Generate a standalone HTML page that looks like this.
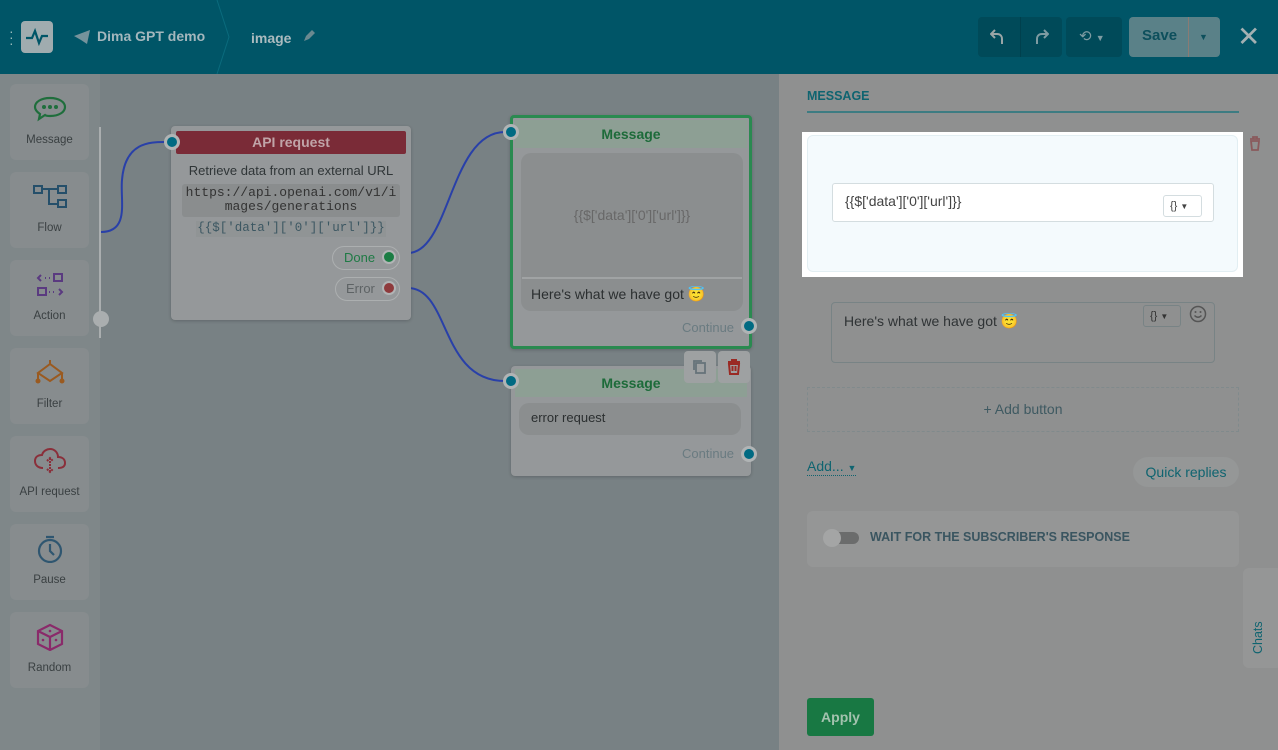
<!DOCTYPE html>
<html><head><meta charset="utf-8"><style>
*{box-sizing:border-box;margin:0;padding:0}
body{width:1278px;height:750px;overflow:hidden;font-family:"Liberation Sans",sans-serif;background:#788184;position:relative}
.abs{position:absolute}
.hdr{left:0;top:0;width:1278px;height:74px;background:#005567}
.side{left:0;top:74px;width:100px;height:676px;background:#7f8789}
.tile{position:absolute;left:10px;width:79px;height:76px;background:#878c8e;border-radius:6px;text-align:center;font-size:11.5px;color:#3a4042}
.tile svg{display:block;margin:11px auto 11px}
.node{background:#95989a;border-radius:4px;box-shadow:0 1px 3px rgba(0,0,0,.2)}
.dot{position:absolute;width:16px;height:16px;border-radius:50%;background:#006a82;border:3px solid #b0b4b5}
.panel{left:779px;top:74px;width:499px;height:676px;background:#8f9090}
.mono{font-family:"Liberation Mono",monospace}
</style></head><body>
<div class="abs hdr">
 <div class="abs" style="left:9px;top:28px;color:#9bb;font-size:14px;line-height:6px">·<br>·<br>·</div>
 <div class="abs" style="left:21px;top:21px;width:32px;height:32px;background:#a0acaf;border-radius:4px"><svg width="32" height="32"><path d="M5 17h6l3-7 4 12 3-7h6" stroke="#005567" stroke-width="2.2" fill="none"/></svg></div>
 <svg class="abs" style="left:73px;top:29px" width="18" height="16"><path d="M1 7L17 1 14 15 8 11z" fill="#76939c"/></svg>
 <div class="abs" style="left:97px;top:28px;color:#a4b7bd;font-size:14px;font-weight:bold">Dima GPT demo</div>
 <svg class="abs" style="left:215px;top:0" width="16" height="74"><path d="M2 0L14 37 2 74" stroke="#0a6b7d" fill="none"/></svg>
 <div class="abs" style="left:251px;top:30px;color:#abbbbf;font-size:14px;font-weight:bold">image</div>
 <svg class="abs" style="left:302px;top:29px" width="14" height="14"><path d="M2 12l2-5 6-6 3 3-6 6z" fill="#6a8990"/></svg>
 <div class="abs" style="left:978px;top:17px;width:84px;height:40px;background:#004a59;border-radius:4px"></div>
 <div class="abs" style="left:1020px;top:17px;width:1px;height:40px;background:#00404d"></div>
 <svg class="abs" style="left:990px;top:28px" width="16" height="18"><path d="M5 2L1 6l4 4M1 6h6c4 0 5 3 5 5v5" fill="none" stroke="#9aa5a6" stroke-width="2"/></svg>
 <svg class="abs" style="left:1033px;top:28px" width="16" height="18"><path d="M11 2l4 4-4 4M15 6H9c-4 0-5 3-5 5v5" fill="none" stroke="#7e9ba2" stroke-width="2"/></svg>
 <div class="abs" style="left:1066px;top:17px;width:56px;height:40px;background:#004a59;border-radius:4px;color:#7e9ba2;font-size:15px;padding:10px 0 0 13px">⟲ <span style="font-size:9px">▼</span></div>
 <div class="abs" style="left:1129px;top:17px;width:91px;height:40px;background:#5a8188;border-radius:4px"></div>
 <div class="abs" style="left:1188px;top:17px;width:1px;height:40px;background:#8a7b74"></div>
 <div class="abs" style="left:1142px;top:27px;color:#0d4f5c;font-size:15px;font-weight:bold">Save</div>
 <div class="abs" style="left:1199px;top:32px;color:#0d4f5c;font-size:9px">▼</div>
 <div class="abs" style="left:1237px;top:20px;color:#a4b0b2;font-size:28px">✕</div>
</div>
<div class="abs side">
 <div class="tile" style="top:10px"><svg width="36" height="28"><path d="M18 3c9 0 15 4 15 9s-6 9-15 9c-2 0-4 0-5-1l-6 4 1-5C5 17 3 15 3 12c0-5 6-9 15-9z" fill="none" stroke="#1f6e3c" stroke-width="2.2"/><circle cx="12" cy="12" r="2" fill="#1f6e3c"/><circle cx="18" cy="12" r="2" fill="#1f6e3c"/><circle cx="24" cy="12" r="2" fill="#1f6e3c"/></svg>Message</div>
 <div class="tile" style="top:98px"><svg width="36" height="28"><g fill="none" stroke="#254f6a" stroke-width="2"><rect x="2" y="3" width="8" height="7"/><rect x="26" y="3" width="8" height="7"/><rect x="26" y="17" width="8" height="7"/><path d="M10 6h16M17 6v15h9"/></g></svg>Flow</div>
 <div class="tile" style="top:186px"><svg width="36" height="28"><g fill="none" stroke="#5a3a80" stroke-width="2"><rect x="22" y="3" width="8" height="7"/><rect x="6" y="17" width="8" height="7"/><path d="M9 4l-3 3 3 3M27 18l3 3-3 3M13 7h1M17 7h1M17 21h1M21 21h1"/></g></svg>Action</div>
 <div class="tile" style="top:274px"><svg width="36" height="28"><g fill="none" stroke="#9a5a20" stroke-width="2"><path d="M18 1v4M18 5l-12 9 12 8 12-8zM6 14v6M30 14v6"/></g><circle cx="6" cy="22" r="2.5" fill="#9a5a20"/><circle cx="30" cy="22" r="2.5" fill="#9a5a20"/></svg>Filter</div>
 <div class="tile" style="top:362px"><svg width="36" height="28"><path d="M11 21c-5 0-8-3-8-7s3-6 7-6c1-4 5-6 8-6 5 0 8 4 8 8 4 0 7 2 7 6s-3 5-7 5" fill="none" stroke="#8a2f3a" stroke-width="2"/><path d="M18 11v14M15 14l3-3 3 3M15 22l3 3 3-3" stroke="#8a2f3a" stroke-width="2" fill="none" stroke-dasharray="2 1"/></svg>API request</div>
 <div class="tile" style="top:450px"><svg width="36" height="28"><circle cx="18" cy="16" r="11" fill="none" stroke="#2f5670" stroke-width="2.2"/><path d="M14 2h8M18 9v7l4 4" stroke="#2f5670" stroke-width="2.2" fill="none"/></svg>Pause</div>
 <div class="tile" style="top:538px"><svg width="36" height="28"><path d="M18 2l12 6v13l-12 6-12-6V8z M6 8l12 6 12-6M18 14v13" fill="none" stroke="#8a2a6a" stroke-width="2.2"/><circle cx="18" cy="8" r="1.3" fill="#8a2a6a"/><circle cx="11" cy="17" r="1.3" fill="#8a2a6a"/><circle cx="24" cy="17" r="1.3" fill="#8a2a6a"/></svg>Random</div>
</div>
<div class="abs" style="left:99px;top:127px;width:2px;height:211px;background:#aaaeaf"></div>
<div class="abs" style="left:93px;top:311px;width:16px;height:16px;border-radius:50%;background:#aaaeaf"></div>
<svg class="abs" style="left:0;top:0" width="780" height="750"><g fill="none" stroke="#2940a8" stroke-width="2"><path d="M101 232C130 232 120 200 122 180 125 142 150 142 165 142"/><path d="M408 253C450 253 450 132 505 132"/><path d="M408 288C450 288 440 381 505 381"/></g></svg>
<div class="abs node" style="left:171px;top:126px;width:240px;height:194px">
 <div class="abs" style="left:5px;top:5px;width:230px;height:23px;background:#7a2b37;border-radius:2px;color:#c0a4a8;font-size:14px;font-weight:bold;text-align:center;line-height:23px">API request</div>
 <div class="abs" style="left:0;top:37px;width:240px;text-align:center;font-size:13px;color:#2f3537">Retrieve data from an external URL</div>
 <div class="abs mono" style="left:11px;top:58px;width:218px;height:33px;background:#8a8d8e;border-radius:3px;text-align:center;font-size:13px;line-height:14px;padding-top:2px;color:#333">https://api.openai.com/v1/i<br>mages/generations</div>
 <div class="abs mono" style="left:25px;top:95px;width:190px;height:16px;background:#909495;text-align:center;font-size:12.5px;color:#3c5762">{{$['data']['0']['url']}}</div>
 <div class="abs" style="left:161px;top:120px;width:68px;height:24px;border-radius:12px;border:1px solid #acafb0;color:#1f7a45;font-size:13px;padding:3px 0 0 11px">Done</div>
 <div class="abs" style="left:164px;top:151px;width:65px;height:24px;border-radius:12px;border:1px solid #acafb0;color:#5e6365;font-size:13px;padding:3px 0 0 10px">Error</div>
 <div class="abs" style="left:211px;top:124px;width:14px;height:14px;border-radius:50%;background:#1b7d44;border:2px solid #b1b4b5"></div>
 <div class="abs" style="left:211px;top:155px;width:14px;height:14px;border-radius:50%;background:#8e3a3c;border:2px solid #b1b4b5"></div>
</div>
<div class="dot" style="left:164px;top:134px"></div>
<div class="abs node" style="left:510px;top:115px;width:242px;height:234px;border:3px solid #2a8a50">
 <div class="abs" style="left:2px;top:2px;width:232px;height:28px;background:#8d9f94;color:#1d6b3a;font-size:14px;font-weight:bold;text-align:center;line-height:28px">Message</div>
 <div class="abs" style="left:8px;top:35px;width:222px;height:158px;background:#8b8e8f;border-radius:10px;overflow:hidden">
  <div class="abs" style="left:1px;top:1px;width:220px;height:125px;border-bottom:2px solid #a0a3a4;text-align:center;line-height:122px;color:#686868;font-size:14px">{{$['data']['0']['url']}}</div>
  <div class="abs" style="left:10px;top:133px;font-size:14px;color:#2b2f30">Here's what we have got 😇</div>
 </div>
 <div class="abs" style="left:169px;top:202px;color:#6a7b81;font-size:13px">Continue</div>
</div>
<div class="dot" style="left:503px;top:124px"></div>
<div class="dot" style="left:741px;top:318px"></div>
<div class="abs node" style="left:511px;top:366px;width:240px;height:110px">
 <div class="abs" style="left:4px;top:3px;width:232px;height:28px;background:#8d9f94;color:#1d6b3a;font-size:14px;font-weight:bold;text-align:center;line-height:28px">Message</div>
 <div class="abs" style="left:8px;top:37px;width:222px;height:32px;background:#8b8e8f;border-radius:10px;font-size:13px;color:#2b2f30;padding:7px 0 0 12px">error request</div>
 <div class="abs" style="left:171px;top:80px;color:#6a7b81;font-size:13px">Continue</div>
</div>
<div class="dot" style="left:503px;top:373px"></div>
<div class="dot" style="left:741px;top:446px"></div>
<div class="abs" style="left:684px;top:351px;width:32px;height:32px;background:#9ea1a2;border-radius:4px"><svg width="32" height="32"><rect x="12" y="12" width="9" height="10" fill="none" stroke="#66737a" stroke-width="1.8"/><path d="M10 19V10h8" fill="none" stroke="#66737a" stroke-width="1.8"/></svg></div>
<div class="abs" style="left:718px;top:351px;width:32px;height:32px;background:#9ea1a2;border-radius:4px"><svg width="32" height="32"><path d="M10 11h12M14 11V9h4v2M11 13h10l-1 10h-8zM14.5 15v5M17.5 15v5" fill="none" stroke="#9a2a24" stroke-width="2"/></svg></div>
<div class="abs panel">
 <div class="abs" style="left:28px;top:15px;color:#0f6470;font-size:12.5px;font-weight:bold">MESSAGE</div>
 <div class="abs" style="left:28px;top:37px;width:432px;height:2px;background:#3d7c82"></div>
 <div class="abs" style="left:23px;top:58px;width:441px;height:145px;background:#fff;padding:3px 5px 5px 5px"><div style="width:431px;height:137px;background:#f4fafd;border:1px solid #e2eef2;border-radius:6px"></div></div>
 <div class="abs" style="left:53px;top:109px;width:382px;height:39px;background:#fff;border:1px solid #d4dde0;border-radius:3px;font-size:14px;color:#444;padding:9px 0 0 12px">{{$['data']['0']['url']}}</div>
 <div class="abs" style="left:384px;top:121px;width:39px;height:22px;border:1px solid #d4dde0;border-radius:3px;font-size:11px;color:#444;padding:4px 0 0 6px">{} <span style="font-size:8px">▼</span></div>
 <svg class="abs" style="left:467px;top:60px" width="18" height="18"><path d="M4 5h10M7 5V3h4v2M5 7h8l-1 9H6z" fill="none" stroke="#8a5a5c" stroke-width="1.8"/></svg>
 <div class="abs" style="left:52px;top:228px;width:384px;height:61px;border:1px solid #788385;border-radius:4px;font-size:14px;color:#2f3335;padding:10px 0 0 12px">Here's what we have got 😇</div>
 <div class="abs" style="left:364px;top:231px;width:38px;height:22px;border:1px solid #788385;border-radius:3px;font-size:11px;color:#333;padding:4px 0 0 6px">{} <span style="font-size:8px">▼</span></div>
 <svg class="abs" style="left:410px;top:231px" width="18" height="18"><circle cx="9" cy="9" r="7.5" fill="none" stroke="#555" stroke-width="1.5"/><circle cx="6.5" cy="7" r="1" fill="#555"/><circle cx="11.5" cy="7" r="1" fill="#555"/><path d="M5.5 10.5q3.5 3.5 7 0" fill="none" stroke="#555" stroke-width="1.4"/></svg>
 <div class="abs" style="left:28px;top:313px;width:432px;height:45px;border:1px dashed #808a8c;text-align:center;line-height:43px;font-size:14px;color:#3f5a62">+ Add button</div>
 <div class="abs" style="left:28px;top:384px;font-size:14px;color:#0f6470;border-bottom:1px dotted #0f6470;padding-bottom:1px">Add... <span style="font-size:9px">▼</span></div>
 <div class="abs" style="left:354px;top:383px;width:106px;height:30px;background:#959797;border-radius:15px;text-align:center;line-height:30px;font-size:14px;color:#0f6470">Quick replies</div>
 <div class="abs" style="left:28px;top:437px;width:432px;height:56px;background:#959696;border-radius:6px"></div>
 <div class="abs" style="left:46px;top:458px;width:34px;height:12px;border-radius:6px;background:#6b6c6c"></div>
 <div class="abs" style="left:44px;top:455px;width:18px;height:18px;border-radius:50%;background:#a4a5a5"></div>
 <div class="abs" style="left:91px;top:456px;font-size:12.5px;font-weight:bold;color:#3a5560">WAIT FOR THE SUBSCRIBER'S RESPONSE</div>
 <div class="abs" style="left:464px;top:494px;width:40px;height:100px;background:#959696;border-radius:6px"></div>
 <div class="abs" style="left:472px;top:580px;transform:rotate(-90deg);transform-origin:0 0;font-size:12.5px;color:#0f6470">Chats</div>
 <div class="abs" style="left:28px;top:624px;width:67px;height:38px;background:#187843;border-radius:3px;color:#a3c2ae;font-size:14px;font-weight:bold;text-align:center;line-height:38px">Apply</div>
</div>
</body></html>
